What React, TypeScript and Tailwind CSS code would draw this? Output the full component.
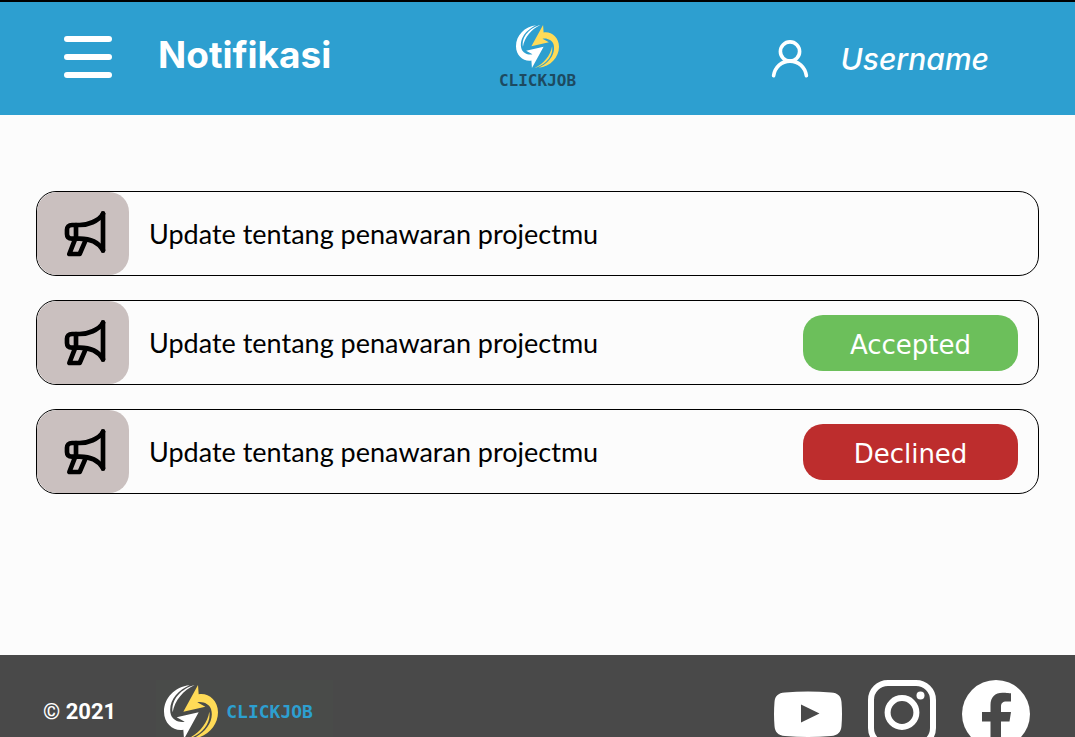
import type { ReactNode } from 'react'

type Status = 'accepted' | 'declined'

interface Notification {
  id: number
  text: string
  status?: Status
}

const notifications: Notification[] = [
  { id: 1, text: 'Update tentang penawaran projectmu' },
  { id: 2, text: 'Update tentang penawaran projectmu', status: 'accepted' },
  { id: 3, text: 'Update tentang penawaran projectmu', status: 'declined' },
]

const statusStyles: Record<Status, string> = {
  accepted: 'bg-[#6cbf5b]',
  declined: 'bg-[#bd2d2d]',
}

const statusLabels: Record<Status, string> = {
  accepted: 'Accepted',
  declined: 'Declined',
}

// one half of the logo, the other half is the same shape turned by 180 degrees
function LogoHalf() {
  return (
    <>
      <path d="M60 162 58 134C30 139 0 117 0 80 0 40 32 5 77 1 38 17 10 54 21 90c5 15 25 24 41 20L38 97l66-15Z" />
      <path d="M92 0C54 10 20 42 26 82 32 46 58 16 92 0Z" />
    </>
  )
}

function LogoMark({ className }: { className: string }) {
  return (
    <svg viewBox="0 0 162 162" className={className} aria-hidden="true">
      <g fill="#fff">
        <LogoHalf />
      </g>
      <g fill="#ffdb57" transform="rotate(180 81 81)">
        <LogoHalf />
      </g>
    </svg>
  )
}

function MegaphoneIcon() {
  return (
    <svg
      viewBox="0 0 132 144"
      className="h-12 w-11"
      fill="none"
      stroke="#000"
      strokeWidth="14"
      strokeLinecap="round"
      strokeLinejoin="round"
      aria-hidden="true"
    >
      <path d="M120 10v112" />
      <path d="M120 12C106 34 74 45 50 45H27C17 45 12 51 12 59v13c0 9 5 14 15 14h23c28 0 54 8 70 34" />
      <path d="M39 45v41" />
      <path d="M36 88 19 132h31l19-44" />
    </svg>
  )
}

function UserIcon() {
  return (
    <svg
      viewBox="0 0 38 38"
      className="size-[38px]"
      fill="none"
      stroke="#fff"
      strokeWidth="3.6"
      strokeLinecap="round"
      aria-hidden="true"
    >
      <circle cx="19" cy="11.500" r="9.600" />
      <path d="M2.600 35.600C4 27 10.500 21.100 19 21.100S34 27 35.400 35.600" />
    </svg>
  )
}

function YoutubeIcon() {
  return (
    <svg viewBox="0 0 68 68" className="size-[68px]" aria-hidden="true">
      <path
        fill="#fff"
        fillRule="evenodd"
        d="M11 12.500Q34 10.500 57 12.500C64 13 67 16 67.500 22Q68.500 34 67.500 46C67 52 64 55.500 57 56Q34 58 11 56C4 55.500 1 52 .5 46Q-.5 34 .5 22C1 16 4 13 11 12.500ZM27 24.500v18L45.500 33.500Z"
      />
    </svg>
  )
}

function InstagramIcon() {
  return (
    <svg viewBox="0 0 68 68" className="size-[68px]" fill="none" stroke="#fff" aria-hidden="true">
      <rect x="3" y="3" width="62" height="62" rx="17" strokeWidth="6" />
      <circle cx="34" cy="32.500" r="14.400" strokeWidth="6" />
      <circle cx="52.500" cy="15.500" r="4" fill="#fff" stroke="none" />
    </svg>
  )
}

function FacebookIcon() {
  return (
    <svg viewBox="0 0 68 68" className="size-[68px]" aria-hidden="true">
      <circle cx="34" cy="34" r="34" fill="#fff" />
      <path
        fill="#494949"
        d="M28.500 68V41.500H20v-9.500h8.500v-7C28.500 17 33 12.700 40.500 12.700c3.500 0 8.500.6 8.500.6v8.200h-4.500c-4 0-5.500 2-5.500 5V32h10l-1.500 9.500H39V68Z"
      />
    </svg>
  )
}

function SocialLink({ label, children }: { label: string; children: ReactNode }) {
  return (
    <a href="#" aria-label={label} className="block">
      {children}
    </a>
  )
}

function Header() {
  return (
    <header className="grid h-[115px] shrink-0 grid-cols-[1fr_auto_1fr] items-center border-t-2 border-black bg-[#2d9fd0] pb-1">
      <div className="flex items-center gap-[46px] pb-1 pl-16">
        <button type="button" aria-label="Menu" className="flex flex-col gap-3 pt-1">
          <span className="h-[6px] w-12 rounded-sm bg-white" />
          <span className="h-[6px] w-12 rounded-sm bg-white" />
          <span className="h-[6px] w-12 rounded-sm bg-white" />
        </button>
        <h1 className="font-['Inter',sans-serif] text-[37px] leading-10 font-bold text-white">
          Notifikasi
        </h1>
      </div>

      <a href="#" className="flex flex-col items-center gap-[5px]">
        <LogoMark className="size-[43px]" />
        <span className="font-['DejaVu_Sans_Mono',monospace] text-base leading-4 font-bold text-[#1d4a60]">
          CLICKJOB
        </span>
      </a>

      <a href="#" className="flex items-center justify-end gap-8 pt-1 pr-[86px]">
        <UserIcon />
        <span className="font-['Inter',sans-serif] text-[30px] leading-9 font-medium text-white italic">
          Username
        </span>
      </a>
    </header>
  )
}

function NotificationCard({ text, status }: Omit<Notification, 'id'>) {
  return (
    <li className="flex h-[85px] items-center overflow-hidden rounded-[20px] border border-black pr-5">
      <div className="flex h-full w-[92px] shrink-0 items-center justify-center rounded-[20px] bg-[#cac0bf] pl-1">
        <MegaphoneIcon />
      </div>
      <p className="flex-1 pl-5 font-['Lato',sans-serif] text-[27px] leading-9 text-black">{text}</p>
      {status && (
        <button
          type="button"
          className={`h-14 w-[215px] rounded-[20px] pt-1 font-['DejaVu_Sans',sans-serif] text-[26px] leading-8 text-white ${statusStyles[status]}`}
        >
          {statusLabels[status]}
        </button>
      )}
    </li>
  )
}

function Footer() {
  return (
    <footer className="flex h-[82px] shrink-0 items-start justify-between overflow-hidden bg-[#494949] pt-[25px] pr-[45px] pl-[43px]">
      <div className="flex h-16 items-center gap-10">
        <p className="font-['Roboto',sans-serif] text-[22px] leading-7 font-bold text-white">© 2021</p>
        <a href="#" className="flex h-16 items-center gap-2 bg-[#494b49] pr-5 pl-2">
          <LogoMark className="size-[54px]" />
          <span className="font-['DejaVu_Sans_Mono',monospace] text-lg leading-5 font-bold text-[#2d9fd0]">
            CLICKJOB
          </span>
        </a>
      </div>
      <nav aria-label="Social media" className="flex gap-[26px]">
        <SocialLink label="YouTube">
          <YoutubeIcon />
        </SocialLink>
        <SocialLink label="Instagram">
          <InstagramIcon />
        </SocialLink>
        <SocialLink label="Facebook">
          <FacebookIcon />
        </SocialLink>
      </nav>
    </footer>
  )
}

export default function App() {
  return (
    <div className="flex h-screen flex-col overflow-hidden bg-[#fcfcfc]">
      <Header />
      <main className="flex-1 px-9 pt-[76px]">
        <ul className="flex flex-col gap-6">
          {notifications.map((n) => (
            <NotificationCard key={n.id} text={n.text} status={n.status} />
          ))}
        </ul>
      </main>
      <Footer />
    </div>
  )
}
